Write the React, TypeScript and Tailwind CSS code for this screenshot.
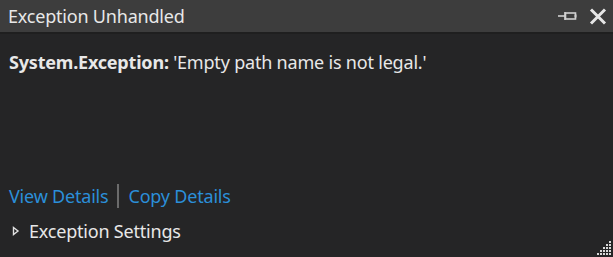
import React from 'react';

const PinIcon = () => (
  <svg width="22" height="12" viewBox="0 0 22 12" fill="none" stroke="#d0d0d0" strokeWidth={1.6}>
    <path d="M1 6h7" />
    <path d="M8 2v8" />
    <rect x="8.5" y="3" width="10" height="6" />
    <path d="M18.5 4.5v3" strokeWidth={2} />
  </svg>
);

const CloseIcon = () => (
  <svg width="18" height="17" viewBox="0 0 18 17" fill="none" stroke="#e6e6e6" strokeWidth={3}>
    <path d="M2 1.5l14 14M16 1.5l-14 14" />
  </svg>
);

const ResizeGrip = () => {
  const dots: [number, number][] = [];
  for (let r = 0; r < 5; r++) {
    for (let c = 0; c < 5; c++) {
      if (r + c >= 4) dots.push([c * 3, r * 3]);
    }
  }
  return (
    <svg width="15" height="15" viewBox="0 0 15 15">
      {dots.map(([x, y], i) => (
        <rect key={i} x={x} y={y} width="2" height="2" fill="#d8d8d8" />
      ))}
    </svg>
  );
};

export default function App() {
  return (
    <div
      className="w-[613px] h-[257px] bg-[#252526] flex flex-col relative overflow-hidden"
      style={{ fontFamily: '"Noto Sans", "Open Sans", sans-serif' }}
    >
      {/* Header */}
      <div className="h-[34px] bg-[#3d3d3d] border-b-2 border-[#1f1f1f] flex items-center justify-between pl-[8px] pr-[6px]">
        <span className="text-[18px] leading-none text-[#e8e8e8] tracking-[-0.2px]">Exception Unhandled</span>
        <div className="flex items-center gap-[10px]">
          <PinIcon />
          <CloseIcon />
        </div>
      </div>

      {/* Content */}
      <div className="flex-1 flex flex-col px-[9px] pt-[16px]">
        <div className="text-[18px] leading-[24px] text-[#e8e8e8] tracking-[-0.2px]">
          <span className="font-bold">System.Exception:</span> 'Empty path name is not legal.'
        </div>
        <div className="flex-1" />
        <div className="flex items-center text-[18px] leading-[24px] tracking-[-0.2px] text-[#2b8fd9]">
          <span>View Details</span>
          <span className="w-[2px] h-[24px] bg-[#6b6b6b] mx-[9px]" />
          <span>Copy Details</span>
        </div>
        <div className="flex items-center mt-[11px] mb-[14px] text-[18px] leading-[24px] tracking-[-0.2px] text-[#e8e8e8]">
          <svg width="8" height="10" viewBox="0 0 8 10" className="ml-[3px] mr-[9px]">
            <path d="M1.5 1.5L6 5L1.5 8.5Z" fill="none" stroke="#e0e0e0" strokeWidth={1.4} />
          </svg>
          <span>Exception Settings</span>
        </div>
      </div>

      <div className="absolute right-[1px] bottom-[1px]">
        <ResizeGrip />
      </div>
    </div>
  );
}
